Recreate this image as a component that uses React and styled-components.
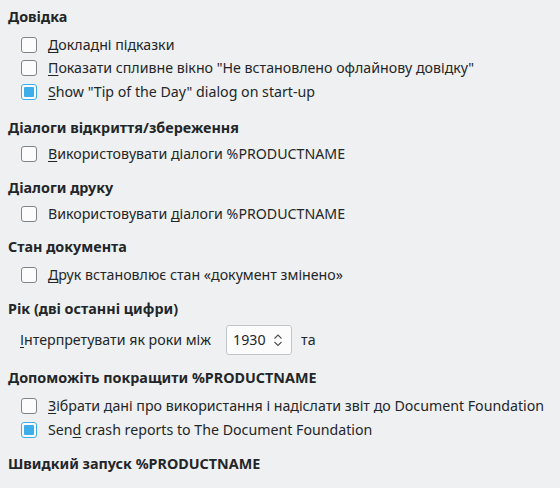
import React from "react";
import styled, { createGlobalStyle } from "styled-components";

const GlobalStyle = createGlobalStyle`
  html, body {
    margin: 0;
    padding: 0;
    background: #eff0f1;
  }
  body {
    font-family: "Noto Sans", "DejaVu Sans", sans-serif;
    font-size: 14.2px;
    color: #232629;
  }
`;

const Page = styled.div`
  width: 560px;
  height: 488px;
  overflow: hidden;
  padding: 7px 0 0 8px;
  box-sizing: border-box;
`;

const Section = styled.section`
  margin-bottom: ${(p) => p.gap ?? 12}px;
`;

const Heading = styled.div`
  font-weight: 700;
  font-size: 14.35px;
  line-height: 20px;
  margin-bottom: ${(p) => p.gap ?? 5}px;
`;

const Row = styled.label`
  display: flex;
  align-items: center;
  height: 23.5px;
  padding-left: 13px;
  gap: 11px;
  line-height: 20px;
  white-space: nowrap;
`;

const Box = styled.span`
  width: 16px;
  height: 16px;
  box-sizing: border-box;
  flex: none;
  border-radius: 3px;
  border: 1px solid ${(p) => (p.checked ? "#3daee9" : "#7f8388")};
  background: #fcfcfc;
  display: flex;
  align-items: center;
  justify-content: center;

  &::after {
    content: "";
    display: ${(p) => (p.checked ? "block" : "none")};
    width: 10px;
    height: 10px;
    border-radius: 1px;
    background: #3daee9;
  }
`;

const U = styled.span`
  text-decoration: underline;
  text-underline-offset: 2px;
`;

const SpinRow = styled.div`
  display: flex;
  align-items: center;
  padding-left: 12px;
  height: 32px;
  white-space: nowrap;
`;

const SpinBox = styled.div`
  display: flex;
  align-items: center;
  justify-content: space-between;
  width: 66px;
  height: 30px;
  box-sizing: border-box;
  margin: 0 9px 0 15px;
  padding: 0 8px 0 6px;
  background: #fcfcfc;
  border: 1px solid #c3c6c9;
  border-radius: 3px;
`;

const Arrows = styled.svg`
  width: 10px;
  height: 18px;
`;

function Check({ checked, children }) {
  return (
    <Row>
      <Box checked={checked} />
      <span>{children}</span>
    </Row>
  );
}

export default function App() {
  return (
    <Page>
      <GlobalStyle />
      <Section gap={14.5}>
        <Heading gap={6}>Довідка</Heading>
        <Check>
          <U>Д</U>окладні підказки
        </Check>
        <Check>
          <U>П</U>оказати спливне вікно "Не встановлено офлайнову довідку"
        </Check>
        <Check checked>
          <U>S</U>how "Tip of the Day" dialog on start-up
        </Check>
      </Section>

      <Section gap={12}>
        <Heading gap={4}>Діалоги відкриття/збереження</Heading>
        <Check>
          <U>В</U>икористовувати діалоги %PRODUCTNAME
        </Check>
      </Section>

      <Section gap={11}>
        <Heading gap={5}>Діалоги друку</Heading>
        <Check>
          Використовувати <U>д</U>іалоги %PRODUCTNAME
        </Check>
      </Section>

      <Section gap={12}>
        <Heading gap={6}>Стан документа</Heading>
        <Check>
          <U>Д</U>рук встановлює стан «документ змінено»
        </Check>
      </Section>

      <Section gap={12}>
        <Heading gap={5}>Рік (дві останні цифри)</Heading>
        <SpinRow>
          <span>
            <U>І</U>нтерпретувати як роки між
          </span>
          <SpinBox>
            <span>1930</span>
            <Arrows viewBox="0 0 10 18">
              <path
                d="M1.5 7.5 L5 4 L8.5 7.5 M1.5 11 L5 14.5 L8.5 11"
                fill="none"
                stroke="#4d4f52"
                strokeWidth="1.1"
              />
            </Arrows>
          </SpinBox>
          <span>та</span>
        </SpinRow>
      </Section>

      <Section gap={12}>
        <Heading gap={7}>Допоможіть покращити %PRODUCTNAME</Heading>
        <Check>
          <U>З</U>ібрати дані про використання і надіслати звіт до Document Foundation
        </Check>
        <Check checked>
          Sen<U>d</U> crash reports to The Document Foundation
        </Check>
      </Section>

      <Section>
        <Heading>Швидкий запуск %PRODUCTNAME</Heading>
      </Section>
    </Page>
  );
}
